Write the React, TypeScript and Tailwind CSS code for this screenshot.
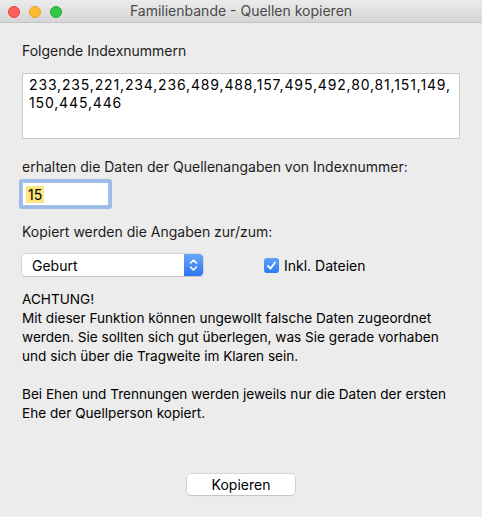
import React from "react";

export default function App() {
  return (
    <div
      className="w-[482px] h-[517px] bg-[#ececec] flex flex-col overflow-hidden text-[#1c1c1c]"
      style={{ fontFamily: "Inter, 'Liberation Sans', sans-serif" }}
    >
      {/* Title bar */}
      <div className="relative h-[23px] shrink-0 bg-gradient-to-b from-[#ebebeb] to-[#d6d6d6] border-b border-[#c4c4c4] flex items-center justify-center">
        <div className="absolute left-[8px] top-[6px] flex gap-[9px]">
          <div className="w-[12px] h-[12px] rounded-full bg-[#fc5f57] border border-[#e2463f]" />
          <div className="w-[12px] h-[12px] rounded-full bg-[#fdbc2e] border border-[#e0a124]" />
          <div className="w-[12px] h-[12px] rounded-full bg-[#33c748] border border-[#27aa35]" />
        </div>
        <span className="text-[14px] text-[#4a4a4a] leading-none">Familienbande - Quellen kopieren</span>
      </div>

      <div className="flex flex-col px-[22px] pt-[19px] text-[14px]">
        <div className="leading-[18px]">Folgende Indexnummern</div>

        <div className="mt-[13px] h-[66px] w-[438px] bg-white border border-[#c9c9c9] px-[6px] pt-[2px] leading-[18px] tracking-[0.85px] text-black whitespace-nowrap">
          233,235,221,234,236,489,488,157,495,492,80,81,151,149,
          <br />
          150,445,446
        </div>

        <div className="mt-[19px] leading-[18px]">erhalten die Daten der Quellenangaben von Indexnummer:</div>

        <div className="mt-[6px] w-[87px] h-[24px] bg-white border border-[#a9c2e6] shadow-[0_0_0_3px_#9dbbe9] rounded-[1px] flex items-center pl-[3px]">
          <span className="bg-[#fbe77e] px-[2px] leading-[17px] text-black">15</span>
        </div>

        <div className="mt-[17px] leading-[18px]">Kopiert werden die Angaben zur/zum:</div>

        <div className="mt-[13px] flex items-center">
          <div className="w-[181px] h-[22px] bg-white rounded-[4px] shadow-[0_0_0_0.5px_#c2c2c2,0_1px_1px_rgba(0,0,0,0.15)] flex items-center justify-between">
            <span className="pl-[10px] text-black">Geburt</span>
            <div className="w-[19px] h-[22px] rounded-r-[4px] bg-gradient-to-b from-[#68a8fa] to-[#2d74ef] flex items-center justify-center">
              <svg width="9" height="14" viewBox="0 0 9 14" fill="none" stroke="white" strokeWidth="1.6" strokeLinecap="round" strokeLinejoin="round">
                <path d="M1.5 5 L4.5 2 L7.5 5" />
                <path d="M1.5 9 L4.5 12 L7.5 9" />
              </svg>
            </div>
          </div>
          <div className="ml-[61px] flex items-center gap-[5px]">
            <div className="w-[15px] h-[15px] rounded-[3px] bg-gradient-to-b from-[#5aa2f9] to-[#2f7bf1] flex items-center justify-center">
              <svg width="11" height="11" viewBox="0 0 11 11" fill="none" stroke="white" strokeWidth="1.8" strokeLinecap="round" strokeLinejoin="round">
                <path d="M2 6 L4.5 8.5 L9 2.5" />
              </svg>
            </div>
            <span className="text-black">Inkl. Dateien</span>
          </div>
        </div>

        <div className="mt-[14px] leading-[19px] text-[13.6px] text-black whitespace-nowrap">
          <div>ACHTUNG!</div>
          <div>Mit dieser Funktion können ungewollt falsche Daten zugeordnet</div>
          <div>werden. Sie sollten sich gut überlegen, was Sie gerade vorhaben</div>
          <div>und sich über die Tragweite im Klaren sein.</div>
          <div className="h-[19px]" />
          <div>Bei Ehen und Trennungen werden jeweils nur die Daten der ersten</div>
          <div>Ehe der Quellperson kopiert.</div>
        </div>

        <div className="mt-[51px] flex justify-center">
          <div className="w-[108px] h-[21px] bg-white rounded-[4px] shadow-[0_0_0_0.5px_#bdbdbd,0_1px_1px_rgba(0,0,0,0.15)] flex items-center justify-center text-black">
            Kopieren
          </div>
        </div>
      </div>
    </div>
  );
}
